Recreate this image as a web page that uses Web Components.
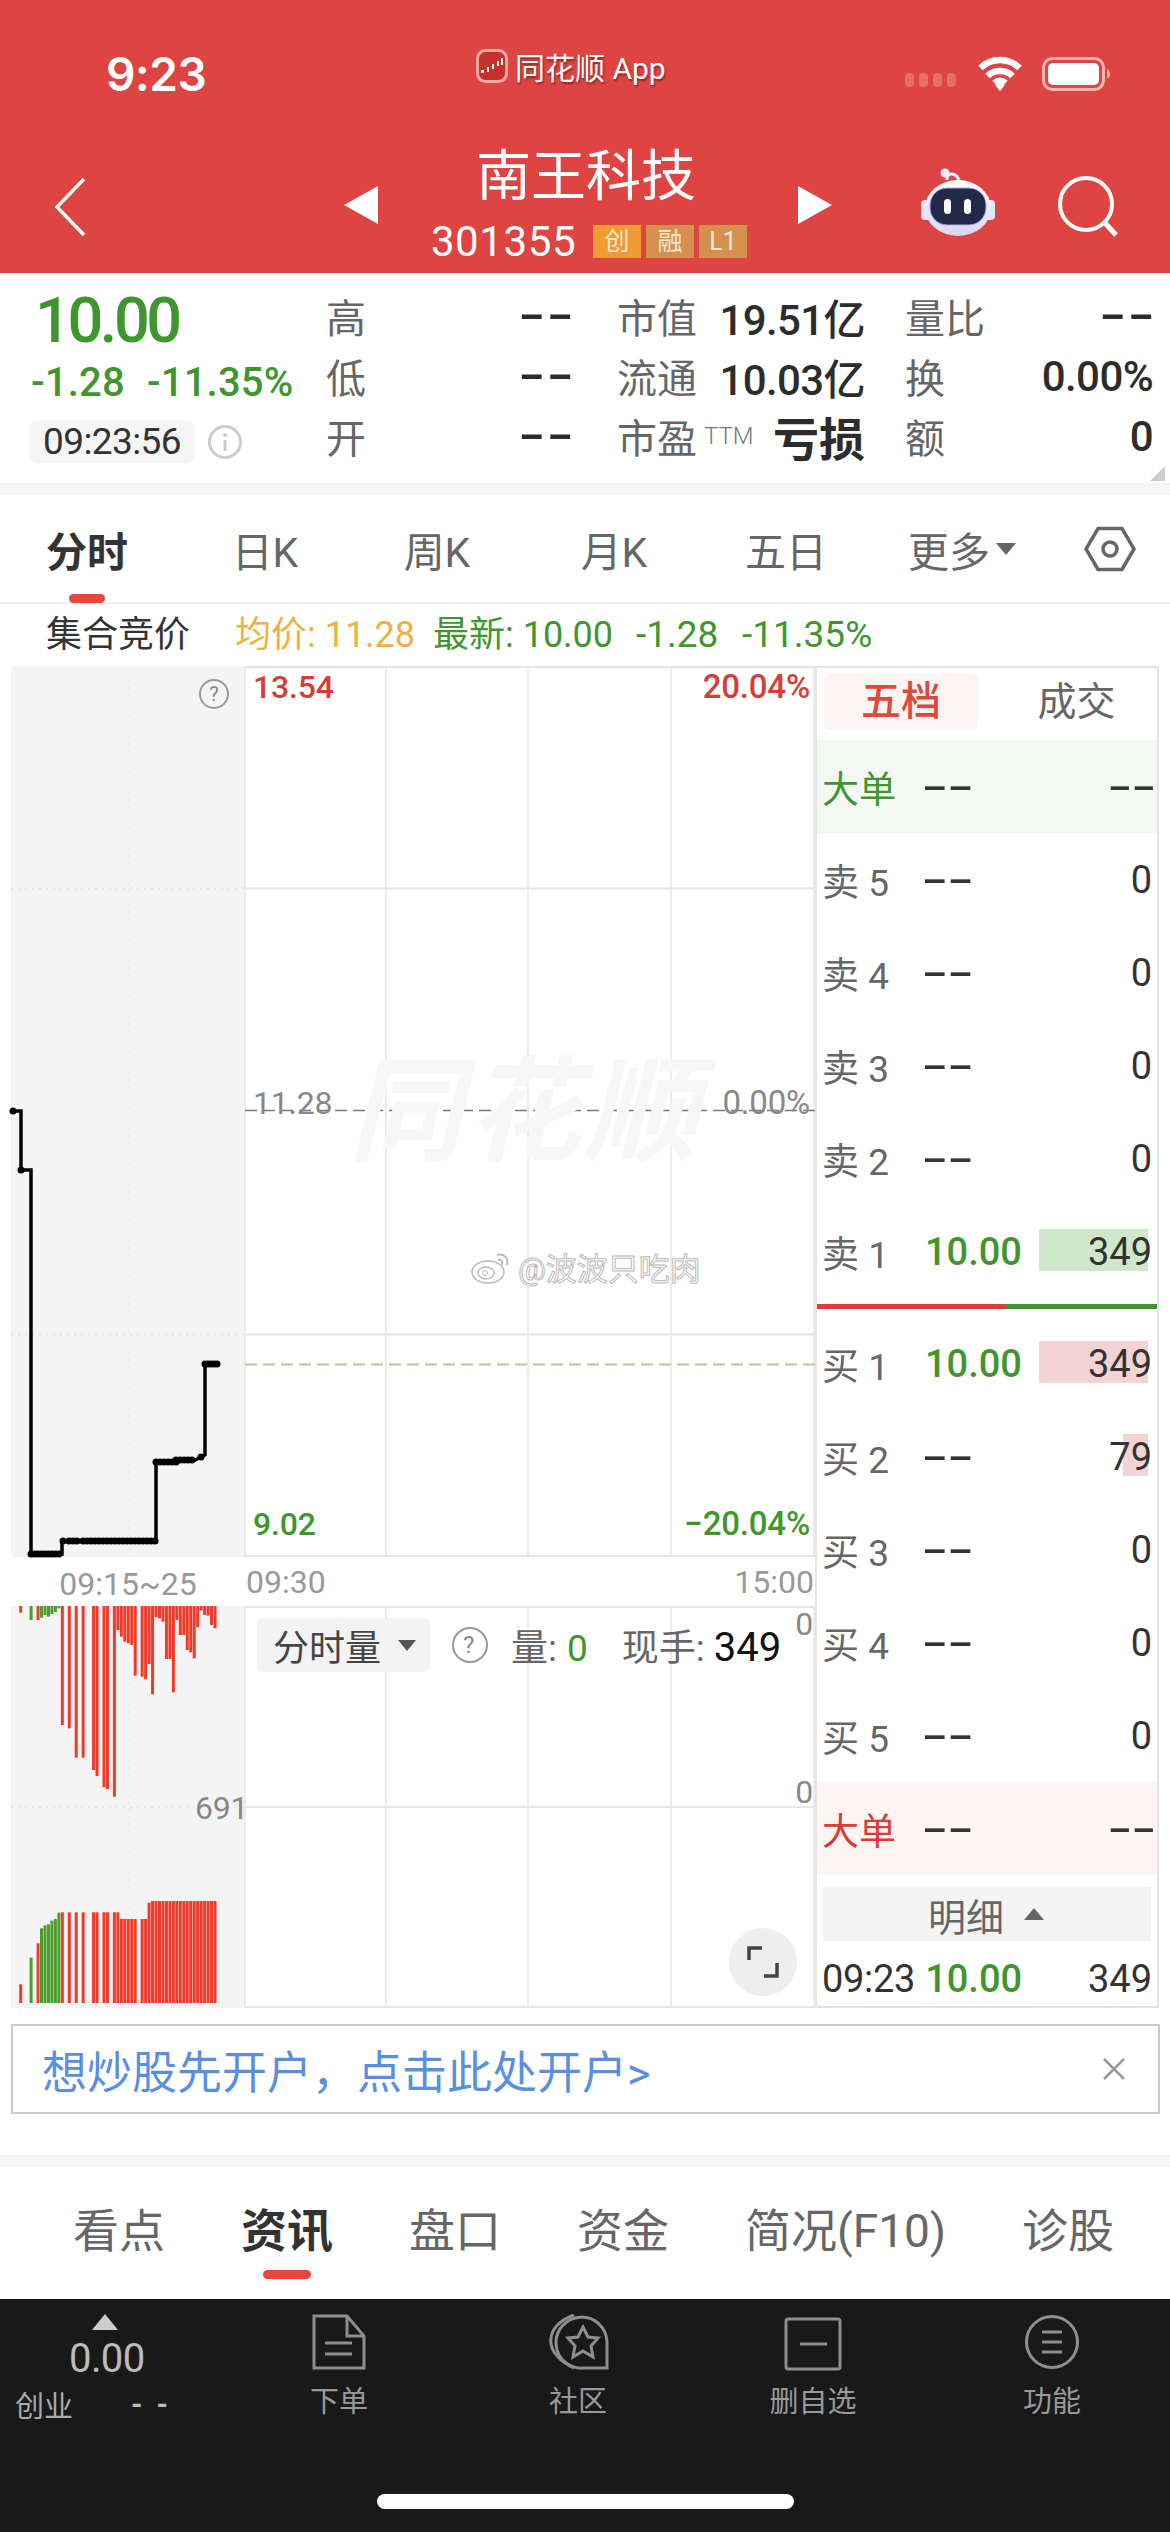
<!DOCTYPE html>
<html lang="zh-CN">
<head>
<meta charset="utf-8">
<title>南王科技</title>
<style>
html,body{margin:0;padding:0;background:#fff}
body{width:1170px;height:2532px;overflow:hidden;display:flex;flex-direction:column;font-family:Roboto,"Noto Sans CJK SC",sans-serif;color:#333}
</style>
</head>
<body>
<app-header></app-header>
<quote-panel></quote-panel>
<period-tabs></period-tabs>
<info-row></info-row>
<chart-panel>
  <trend-chart></trend-chart>
  <order-book>
    <book-row kind="sell-big"><span slot="label">大单</span><span slot="price" class="d">--</span><span slot="vol" class="d">--</span></book-row>
    <book-row><span slot="label">卖 5</span><span slot="price" class="d">--</span><span slot="vol">0</span></book-row>
    <book-row><span slot="label">卖 4</span><span slot="price" class="d">--</span><span slot="vol">0</span></book-row>
    <book-row><span slot="label">卖 3</span><span slot="price" class="d">--</span><span slot="vol">0</span></book-row>
    <book-row><span slot="label">卖 2</span><span slot="price" class="d">--</span><span slot="vol">0</span></book-row>
    <book-row bar="green" barw="109"><span slot="label">卖 1</span><span slot="price" class="g">10.00</span><span slot="vol">349</span></book-row>
    <ratio-line></ratio-line>
    <book-row bar="pink" barw="109"><span slot="label">买 1</span><span slot="price" class="g">10.00</span><span slot="vol">349</span></book-row>
    <book-row bar="pink" barw="25"><span slot="label">买 2</span><span slot="price" class="d">--</span><span slot="vol">79</span></book-row>
    <book-row><span slot="label">买 3</span><span slot="price" class="d">--</span><span slot="vol">0</span></book-row>
    <book-row><span slot="label">买 4</span><span slot="price" class="d">--</span><span slot="vol">0</span></book-row>
    <book-row><span slot="label">买 5</span><span slot="price" class="d">--</span><span slot="vol">0</span></book-row>
    <book-row kind="buy-big"><span slot="label">大单</span><span slot="price" class="d">--</span><span slot="vol" class="d">--</span></book-row>
  </order-book>
</chart-panel>
<ad-banner>想炒股先开户，点击此处开户&gt;</ad-banner>
<section-tabs></section-tabs>
<bottom-bar></bottom-bar>

<script>
const RED='#DE4441',GREEN='#3F962E';
function def(name,html,extra){
  customElements.define(name,class extends HTMLElement{
    constructor(){super();const r=this.attachShadow({mode:'open'});r.innerHTML=typeof html==='function'?html(this):html;if(extra)extra(this,r);}
  });
}

def('app-header',`<style>
:host{display:block;height:273px;background:${RED};color:#fff;flex:none}
.status{display:flex;height:148px;align-items:center}
.time{margin-left:106px;width:102px;font:600 46px/1 Inter,sans-serif;letter-spacing:-.4px;white-space:nowrap}
.app{margin-left:268px;width:192px;display:flex;align-items:center;gap:7px;margin-bottom:16px;font-size:30px;color:#fff;text-shadow:1px 2px 2px rgba(90,10,10,.55);white-space:nowrap}
.dots{margin-left:237px;margin-top:12px;width:53px;display:flex;gap:5px}
.dots i{width:9px;height:14px;border-radius:4px;background:rgba(255,255,255,.22)}
.wifi{margin-left:17px;width:47px}.batt{margin-left:20px;width:68px}
svg{display:block}
.nav{display:flex;height:125px}
.back{margin:29px 0 0 52px;width:36px}
.tri{margin:38px 0 0 0;width:34px}
.mid{width:420px;display:flex;flex-direction:column;align-items:center}
.name{font-size:55px;line-height:56px;margin-top:0;margin-left:-4px;white-space:nowrap}
.code{display:flex;align-items:center;margin-top:21px;margin-left:2px;height:33px;font-size:42px;letter-spacing:.6px}
.code b{font-weight:400;font-size:25px;letter-spacing:0;width:48px;height:33px;line-height:33px;text-align:center;background:#D4904F;color:#f6e5d2;margin-left:5px}
.code b.o{background:#EF9C35;margin-left:17px}
.robot{margin:20px 0 0 89px;width:74px}.search{margin:28px 0 0 63px;width:62px}
</style>
<div class="status">
  <div class="time">9:23</div>
  <div class="app">
   <svg width="32" height="34" viewBox="0 0 32 34"><rect x="1.5" y="1.5" width="29" height="31" rx="8" fill="#C8302E" stroke="#F0A8A5" stroke-width="3"/><path d="M5 21h3v3H5zM11 18h2v5h-2zM16 15h2v5h-2zM21 12h2v5h-2zM25 9h2v7h-2z" fill="#fff"/></svg>
   <span>同花顺 App</span></div>
  <div class="dots"><i></i><i></i><i></i><i></i></div>
  <div class="wifi"><svg width="50" height="36" viewBox="0 0 47 36"><path d="M4 12a28 28 0 0 1 39 0M11 20a18 18 0 0 1 25 0M18 27a8 8 0 0 1 11 0" fill="none" stroke="#fff" stroke-width="6.5"/><path d="M18.5 29l5-3 5 3-5 6z" fill="#fff"/></svg></div>
  <div class="batt"><svg width="68" height="34" viewBox="0 0 68 34"><rect x="1.5" y="1.5" width="60" height="31" rx="9" fill="none" stroke="#F4B4B0" stroke-width="3"/><rect x="6" y="6" width="51" height="22" rx="5" fill="#fff"/><path d="M65 12c2 1 3 3 3 5s-1 4-3 5z" fill="#F4B4B0"/></svg></div>
</div>
<div class="nav">
  <div class="back"><svg width="36" height="60" viewBox="0 0 36 60"><path d="M32 2L5 30l27 28" fill="none" stroke="#fff" stroke-width="3.5"/></svg></div>
  <div class="tri" style="margin-left:256px"><svg width="34" height="38" viewBox="0 0 34 38"><path d="M34 0v38L0 19z" fill="#fff"/></svg></div>
  <div class="mid"><div class="name">南王科技</div>
   <div class="code">301355<b class="o">创</b><b>融</b><b>L1</b></div></div>
  <div class="tri"><svg width="34" height="38" viewBox="0 0 34 38"><path d="M0 0v38l34-19z" fill="#fff"/></svg></div>
  <div class="robot"><svg width="74" height="68" viewBox="0 0 74 68">
    <defs><linearGradient id="h" x1="0" y1="0" x2="0" y2="1"><stop offset="0" stop-color="#fff"/><stop offset="1" stop-color="#D9D6F4"/></linearGradient></defs>
    <path d="M26 12c-1-8 10-9 13 3" fill="none" stroke="#EDEBFA" stroke-width="3"/><circle cx="24" cy="5" r="4.5" fill="#F0EEFB"/>
    <rect x="0" y="32" width="10" height="20" rx="4" fill="#E6E4F8"/><rect x="64" y="32" width="10" height="20" rx="4" fill="#E6E4F8"/>
    <ellipse cx="37" cy="40" rx="33" ry="28" fill="url(#h)"/>
    <rect x="9" y="20" width="56" height="37" rx="17" fill="#222A4A" stroke="#B5A8EE" stroke-width="1"/>
    <rect x="23" y="31" width="7" height="15" rx="3.5" fill="#fff"/><rect x="43" y="31" width="7" height="15" rx="3.5" fill="#fff"/></svg></div>
  <div class="search"><svg width="62" height="64" viewBox="0 0 62 64"><circle cx="28" cy="28" r="26" fill="none" stroke="#fff" stroke-width="4"/><path d="M47 47l11 12" stroke="#fff" stroke-width="5"/></svg></div>
</div>`);

def('q-cell',`<style>
:host{display:flex;align-items:center;justify-content:space-between;height:60px;white-space:nowrap}
.l{font-size:40px;color:#666}
.v{font-size:42px;color:#2c2c2c;letter-spacing:-.6px;font-weight:500}
.v ::slotted(strong){font-size:46px;letter-spacing:0;font-weight:700}
.v ::slotted(.d){display:inline-block;font-weight:700;font-size:40px;letter-spacing:0;transform:scaleX(1.8);transform-origin:right center;position:relative;top:-2px;left:3px}
</style><span class="l"><slot name="l"></slot></span><span class="v"><slot></slot></span>`);

def('quote-panel',`<style>
:host{display:flex;height:210px;flex:none;position:relative;border-bottom:12px solid #f5f5f5;box-sizing:content-box;height:210px}
.left{width:326px;flex:none;padding:18px 0 0 32px;box-sizing:border-box;color:${GREEN}}
.price{font:500 63px/60px Roboto;letter-spacing:-3.4px;margin-left:3px}
.chg{font:500 40px/44px Roboto;margin-top:10px;letter-spacing:.2px;display:flex;gap:22px;white-space:nowrap;margin-left:-1px}
.tm{display:flex;align-items:center;gap:13px;margin-top:15px}
.pill{width:164px;height:43px;border-radius:8px;background:#f5f5f5;color:#333;font:400 37px/43px Roboto;text-align:center;letter-spacing:-.6px;margin-left:-2px}
.col{display:flex;flex-direction:column;padding-top:13px}
.a{width:246px}.b{width:248px;margin-left:45px}.c{width:248px;margin-left:40px}
.corner{position:absolute;right:5px;bottom:2px;width:15px;height:15px;background:#ccc;clip-path:polygon(100% 0,100% 100%,0 100%)}
</style>
<div class="left"><div class="price">10.00</div>
<div class="chg"><span>-1.28</span><span>-11.35%</span></div>
<div class="tm"><div class="pill">09:23:56</div>
<svg width="36" height="36" viewBox="0 0 36 36"><circle cx="18" cy="18" r="15.5" fill="none" stroke="#ccc" stroke-width="3"/><path d="M18 16v11" stroke="#ccc" stroke-width="3"/><circle cx="18" cy="11" r="2" fill="#ccc"/></svg></div></div>
<div class="col a">
<q-cell><span slot="l">高</span><span class="d">--</span></q-cell><q-cell><span slot="l">低</span><span class="d">--</span></q-cell><q-cell><span slot="l">开</span><span class="d">--</span></q-cell></div>
<div class="col b">
<q-cell><span slot="l">市值</span>19.51亿</q-cell><q-cell><span slot="l">流通</span>10.03亿</q-cell><q-cell><span slot="l">市盈<span style="font-size:24px;font-weight:300;color:#777;vertical-align:9px;margin-left:7px">TTM</span></span><strong>亏损</strong></q-cell></div>
<div class="col c">
<q-cell><span slot="l">量比</span><span class="d">--</span></q-cell><q-cell><span slot="l">换</span>0.00%</q-cell><q-cell><span slot="l">额</span>0</q-cell></div>
<div class="corner"></div>`);

def('period-tabs',`<style>
:host{display:flex;height:109px;flex:none;border-bottom:2px solid #eee;box-sizing:border-box;font-size:41px;color:#666}
div{display:flex;align-items:center;justify-content:center;position:relative;box-sizing:border-box;white-space:nowrap}
.on{color:#333;font-weight:700}
.on::after{content:"";position:absolute;left:69px;width:36px;bottom:-1px;height:9px;border-radius:5px;background:#E8453C}
.tr{width:0;height:0;border:10px solid transparent;border-top:12px solid #666;border-bottom:0;margin-left:6px}
</style>
<div class="on" style="width:174px">分时</div><div style="width:182px">日K</div><div style="width:162px">周K</div><div style="width:192px">月K</div><div style="width:152px">五日</div>
<div style="width:200px">更多<span class="tr"></span></div>
<div style="width:96px"><svg width="52" height="46" viewBox="0 0 52 46"><path d="M14 2.500h24L50 23 38 43.500H14L2 23z" fill="none" stroke="#666" stroke-width="3.500"/><circle cx="26" cy="23" r="7" fill="none" stroke="#666" stroke-width="3.500"/></svg></div>`);

def('info-row',`<style>
:host{display:flex;align-items:center;height:62px;flex:none;font-size:36px;line-height:40px;white-space:nowrap}
.t{margin-left:46px;width:189px;color:#333}.y{color:#EDB23F;width:198px}.g{color:${GREEN};width:203px}.h{color:${GREEN};width:106px;font-size:37px}.k{color:${GREEN};font-size:37px}
</style><span class="t">集合竞价</span><span class="y">均价: 11.28</span><span class="g">最新: 10.00</span><span class="h">-1.28</span><span class="k">-11.35%</span>`);

def('chart-panel',`<style>:host{display:flex;height:1342px;flex:none;margin-left:11px}</style><slot></slot>`);

def('trend-chart',()=>{
 const tops=[[0,68,'r'],[3,90,'g'],[5,90,'r'],[6,83,'g'],[7,75,'g'],[8,80,'g'],[9,72,'g'],[10,66,'g'],[11,55,'g'],[12,405,'r'],[14,415,'r'],[16,503,'r'],[18,503,'r'],[21,540,'r'],[22,558,'r'],[24,592,'r'],[25,597,'r'],[27,620,'r'],[28,120,'r'],[29,140,'r'],[30,155,'r'],[31,160,'r'],[32,165,'r'],[33,257,'r'],[35,260,'r'],[36,268,'r'],[37,222,'r'],[38,313,'r'],[39,82,'r'],[40,85,'r'],[41,95,'r'],[42,207,'r'],[43,207,'r'],[44,307,'r'],[45,90,'r'],[46,135,'r'],[47,135,'r'],[48,180,'r'],[49,187,'r'],[50,205,'r'],[51,112,'r'],[52,62,'r'],[53,75,'r'],[54,77,'r'],[55,105,'r'],[56,115,'r']];
 const low={0:1183,3:1103,5:1060,6:1015,7:1006,8:1003,9:992,10:987,11:968};
 const col={r:'#EE3B2B',g:'#4A9E2B'};let bars='';
 for(const [i,b,c] of tops){
   const x=(8.2+i*3.47).toFixed(2);const y=((b/3)+1590-1606).toFixed(1);
   bars+=`<rect x="${x}" y="0" width="3" height="${y}" fill="${col[c]}"/>`;
   let t=low[i]||(i<=28?967:(i<=36?987:(i==37?938:933)));
   const ty=(t/3+1590-1606).toFixed(1);
   bars+=`<rect x="${x}" y="${ty}" width="3" height="${(397-ty).toFixed(1)}" fill="${col[c]}"/>`;
 }
 let dots='';
 const dotRow=(a,b,y,s)=>{for(let x=a;x<=b;x+=s)dots+=`<circle cx="${x}" cy="${y}" r="3.500"/>`;};
 dotRow(2,2,445,1);dotRow(10,10,504,1);dotRow(20,51,888,3.5);
 [52,58,62,66,72,76,80,84,88,92,96,100,104,108,112,116,120,124,128,132,136,140,144].forEach(x=>dots+=`<circle cx="${x}" cy="875" r="3.500"/>`);
 dotRow(145,165,796,4);dotRow(165,184,794,4);dots+=`<circle cx="190" cy="791" r="3.500"/>`;
 dotRow(194,207,698,3);
 return `<style>
:host{display:grid;grid-template-columns:234px 570px;grid-template-rows:891px 49px 402px;width:804px;flex:none;font-size:32px}
.left{background:#f4f4f4;position:relative}.main{position:relative}
svg{position:absolute;left:0;top:0;display:block;overflow:visible}
.lb{position:absolute;white-space:nowrap;line-height:36px;letter-spacing:-.2px;font-weight:500}
.r{color:#D63C38}.g{color:${GREEN}}.gy{color:#888;font-weight:400}
.wm{position:absolute;left:103px;top:372px;font:italic 700 114px/130px "Noto Sans CJK SC",sans-serif;color:#f7f7f7;white-space:nowrap;letter-spacing:4px}
.wb{position:absolute;left:225px;top:578px;display:flex;align-items:center;gap:6px;white-space:nowrap;font-size:31px;color:#fff;-webkit-text-stroke:1px #bbb}
.time{grid-column:1 / 3;display:grid;grid-template-columns:234px 1fr auto;align-items:center;color:#999;font-size:32px;padding-right:1px}
.time span:first-child{text-align:center;padding-top:4px}
.pill{position:absolute;left:12px;top:12px;width:173px;height:54px;border-radius:6px;background:#f3f3f3;display:flex;align-items:center;font-size:36px;color:#444;gap:17px;padding-left:16px;box-sizing:border-box;white-space:nowrap}
.pill i{width:0;height:0;border:9px solid transparent;border-top:11px solid #555;border-bottom:0}
.hd{position:absolute;left:206px;top:12px;display:flex;align-items:center;font-size:37px;color:#666;white-space:nowrap}
.hd b{font-weight:400;color:${GREEN};margin-left:10px}.hd em{font-style:normal;color:#111;margin-left:9px;font-size:40px}
.exp{position:absolute;left:484px;top:322px;width:68px;height:68px;border-radius:50%;background:#eee}
</style>
<div class="left"><svg width="234" height="891">
 <path d="M0 222.500h234M0 668.500h234" stroke="#e5e5e5" stroke-width="2" stroke-dasharray="2 5"/><path d="M117.500 0v891" stroke="#ebebeb" stroke-width="2" stroke-dasharray="2 5"/>
 <circle cx="203" cy="28" r="14" fill="none" stroke="#999" stroke-width="2"/>
 <path d="M0 445H10V504H20V888H51V875H145V796L184 794 194 789V698H207" fill="none" stroke="#000" stroke-width="3.500"/>
 <g fill="#000">${dots}</g></svg>
 <span class="lb gy" style="left:197px;top:10px;font-size:20px;width:12px;text-align:center;color:#888">?</span>
</div>
<div class="main"><svg width="570" height="891">
 <path d="M0 1h570M0 222.500h570M0 668.500h570M0 890h570" stroke="#e6e6e6" stroke-width="2"/>
 <path d="M141 0v891M283 0v891M426 0v891M569 0v891M0 0v891" stroke="#e6e6e6" stroke-width="1.500"/>
 <path d="M0 444.500h570" stroke="#777" stroke-width="1.500" stroke-dasharray="12 6"/>
 <path d="M0 698.500h570" stroke="#C8BE8E" stroke-width="2" stroke-dasharray="12 6"/></svg>
 <div class="wm">同花顺</div>
 <div class="wb"><svg style="position:static" width="42" height="36" viewBox="0 0 42 36"><ellipse cx="18" cy="23" rx="16" ry="11" fill="#fff" stroke="#bbb" stroke-width="1.500"/><ellipse cx="16" cy="24" rx="8" ry="6" fill="#fff" stroke="#bbb" stroke-width="1.500"/><circle cx="15" cy="24" r="2.500" fill="none" stroke="#bbb"/><path d="M27 6c7-2 12 3 10 10M28 11c3-1 5 1 4 5" fill="none" stroke="#bbb" stroke-width="2"/></svg><span>@波波只吃肉</span></div>
 <span class="lb r" style="left:8px;top:3px">13.54</span><span class="lb r" style="right:5px;top:3px;font-size:33px">20.04%</span>
 <span class="lb gy" style="left:8px;top:419px">11.28</span><span class="lb gy" style="right:5px;top:419px;font-size:33px">0.00%</span>
 <span class="lb g" style="left:8px;top:840px">9.02</span><span class="lb g" style="right:5px;top:840px;font-size:33px">−20.04%</span>
</div>
<div class="time"><span>09:15~25</span><span style="padding-left:1px">09:30</span><span>15:00</span></div>
<div class="left"><svg width="234" height="402"><path d="M0 201.500h234" stroke="#e5e5e5" stroke-width="2" stroke-dasharray="2 5"/><path d="M117.500 0v402" stroke="#ebebeb" stroke-width="2" stroke-dasharray="2 5"/>${bars}</svg>
 <span class="lb gy" style="left:184px;top:184px">691</span></div>
<div class="main"><svg width="570" height="402"><path d="M0 1h570M0 201h570M0 401h570" stroke="#e6e6e6" stroke-width="2"/><path d="M141 0v402M283 0v402M426 0v402M569 0v402M0 0v402" stroke="#e6e6e6" stroke-width="1.500"/></svg>
 <div class="pill">分时量<i></i></div>
 <div class="hd"><svg style="position:static;margin-right:22px" width="38" height="38" viewBox="0 0 38 38"><circle cx="19" cy="19" r="17" fill="none" stroke="#999" stroke-width="2"/></svg><span style="position:absolute;left:12px;font-size:24px;color:#888">?</span><span>量:<b>0</b></span><span style="margin-left:34px">现手:<em>349</em></span></div>
 <span class="lb gy" style="right:2px;top:0">0</span><span class="lb gy" style="right:2px;top:168px">0</span>
 <div class="exp"><svg width="68" height="68" viewBox="0 0 68 68"><path d="M20 32V20h13M48 35v13H35" fill="none" stroke="#444" stroke-width="3.500"/></svg></div>
</div>`;});

def('order-book',`<style>
:host{display:flex;flex-direction:column;width:344px;flex:none;border:2px solid #e4e4e4;box-sizing:border-box;font-size:38px;height:1342px}
.tabs{display:flex;height:72px;flex:none;padding:6px 0 0 7px;box-sizing:border-box;font-size:40px}
.a{width:154px;height:56px;line-height:56px;border-radius:6px;background:#FDF3F2;color:#E0483C;text-align:center;font-weight:500}
.b{flex:1;height:56px;line-height:56px;color:#666;text-align:center;font-size:39px;padding-left:18px}
.detail{height:54px;flex:none;margin:12px 6px 0 6px;background:#f4f4f4;display:flex;align-items:center;justify-content:center;color:#666;gap:20px;padding-right:2px;box-sizing:border-box}
.detail i{width:0;height:0;border:10px solid transparent;border-bottom:12px solid #666;border-top:0}
.last{display:flex;height:64px;align-items:center;color:#333;font-size:38px;padding:12px 5px 0 5px;box-sizing:border-box;white-space:nowrap}
.last .p{color:${GREEN};margin-left:10px;font-weight:500}.last .v{margin-left:auto}
</style>
<div class="tabs"><div class="a">五档</div><div class="b">成交</div></div>
<slot></slot>
<div class="detail"><span>明细</span><i></i></div>
<div class="last"><span style="letter-spacing:-.3px">09:23</span><span class="p">10.00</span><span class="v">349</span></div>`);

def('book-row',el=>{
 const k=el.getAttribute('kind');const bar=el.getAttribute('bar');const w=el.getAttribute('barw');
 const bg=k==='sell-big'?'#F3F8F3':k==='buy-big'?'#FCF5F4':'transparent';
 const lc=k==='sell-big'?GREEN:k==='buy-big'?'#D63C38':'#666';
 const bc=bar==='green'?'#CFE8CC':'#F3D3D3';
 return `<style>
:host{display:flex;align-items:center;height:93px;flex:none;position:relative;background:${bg};white-space:nowrap;padding:0 5px 0 5px}
.l{width:103px;color:${lc};font-size:37px;flex:none}
.p{color:#333}.p ::slotted(.g){color:${GREEN};font-weight:500}
.p ::slotted(.d){display:inline-block;transform:scaleX(2);transform-origin:left center;font-weight:500;margin-left:-3px}
.v{margin-left:auto;color:#333;position:relative}
.v ::slotted(.d){display:inline-block;transform:scaleX(1.85);transform-origin:right center;font-weight:500;position:relative;left:4px}
.bar{position:absolute;right:9px;top:24px;height:42px;width:${w||0}px;background:${bc}}
</style>${bar?'<div class="bar"></div>':''}<span class="l"><slot name="label"></slot></span><span class="p"><slot name="price"></slot></span><span class="v"><slot name="vol"></slot></span>`;});

def('ratio-line',`<style>:host{display:flex;height:5px;margin:6px 0 8px;flex:none}i{display:block}</style><i style="width:188px;background:#D6413B"></i><i style="flex:1;background:${GREEN}"></i>`);

def('ad-banner',`<style>
:host{display:flex;align-items:center;justify-content:space-between;flex:none;height:90px;margin:16px 10px 0 11px;border:2px solid #ccc;box-sizing:border-box;padding:0 32px 0 29px;color:#5A8FE0;font-size:45px;white-space:nowrap}
</style><span><slot></slot></span><svg width="24" height="24" viewBox="0 0 24 24"><path d="M2 2l20 20M22 2L2 22" stroke="#999" stroke-width="2.500"/></svg>`);

def('section-tabs',`<style>
:host{display:flex;flex:none;height:144px;margin-top:41px;border-top:12px solid #f5f5f5;box-sizing:border-box;gap:76px;padding:0 0 12px 73px;color:#666;font-size:46px;white-space:nowrap;align-items:center}
span{position:relative}.on{color:#333;font-weight:700}
.on::after{content:"";position:absolute;left:22px;width:48px;top:76px;height:9px;border-radius:5px;background:#E8453C}
</style><span>看点</span><span class="on">资讯</span><span>盘口</span><span>资金</span><span>简况(F10)</span><span>诊股</span>`);

def('bar-item',`<style>
:host{display:flex;flex-direction:column;align-items:center;width:180px;color:#999;font-size:29px;padding-top:15px;box-sizing:border-box}
.i{height:60px}.t{margin-top:8px;line-height:40px}svg{display:block}
</style><div class="i"><slot name="icon"></slot></div><div class="t"><slot></slot></div>`);

def('bottom-bar',`<style>
:host{display:grid;grid-template-columns:249px 180px 59px 180px 55px 180px 59px 180px;flex:1;background:#191919;position:relative;min-height:234px;align-content:start}
.mini{color:#aaa;padding-top:15px;box-sizing:border-box;display:flex;flex-direction:column;position:relative}
.up{width:0;height:0;margin-left:92px;border:13px solid transparent;border-bottom:16px solid #ccc;border-top:0}
.v{margin-left:69px;margin-top:10px;font:400 40px/38px Roboto;color:#bbb;letter-spacing:-.6px}
.row{display:flex;align-items:center;margin-top:5px;margin-left:15px;font-size:29px}
.row span:last-child{margin-left:58px;color:#bbb;font-weight:700;letter-spacing:14px}
.home{position:absolute;left:377px;top:195px;width:417px;height:15px;border-radius:8px;background:#fff}
</style>
<div class="mini"><div class="up"></div><div class="v">0.00</div><div class="row"><span>创业</span><span>--</span></div></div>
<bar-item>下单<svg slot="icon" width="54" height="56" viewBox="0 0 54 56" fill="none" stroke="#8e8e8e" stroke-width="3"><path d="M2 2h33l17 20v32H2z"/><path d="M35 2v20h17"/><path d="M13 29h27M13 40h27"/></svg></bar-item>
<i></i>
<bar-item>社区<svg slot="icon" width="62" height="56" viewBox="0 0 62 56" fill="none" stroke="#8e8e8e" stroke-width="3"><path d="M27 54C-4 40-4 12 27 1"/><path d="M60 54H37A25.500 25.500 0 1 1 60 28z"/><path d="M36 13l5 10 10 1-7 8 2 11-10-6-10 6 2-11-7-8 10-1z"/></svg></bar-item>
<i></i>
<bar-item><svg slot="icon" width="58" height="54" viewBox="0 0 58 54" fill="none" stroke="#8e8e8e" stroke-width="3" style="margin-top:3px"><rect x="2" y="2" width="54" height="50" rx="2"/><path d="M16 27h27"/></svg>删自选</bar-item>
<i></i>
<bar-item><svg slot="icon" width="56" height="56" viewBox="0 0 56 56" fill="none" stroke="#8e8e8e" stroke-width="3"><circle cx="28" cy="28" r="25.500"/><path d="M18 18h20M18 28h20M18 38h20"/></svg>功能</bar-item>
<div class="home"></div>`);
</script>
</body>
</html>
